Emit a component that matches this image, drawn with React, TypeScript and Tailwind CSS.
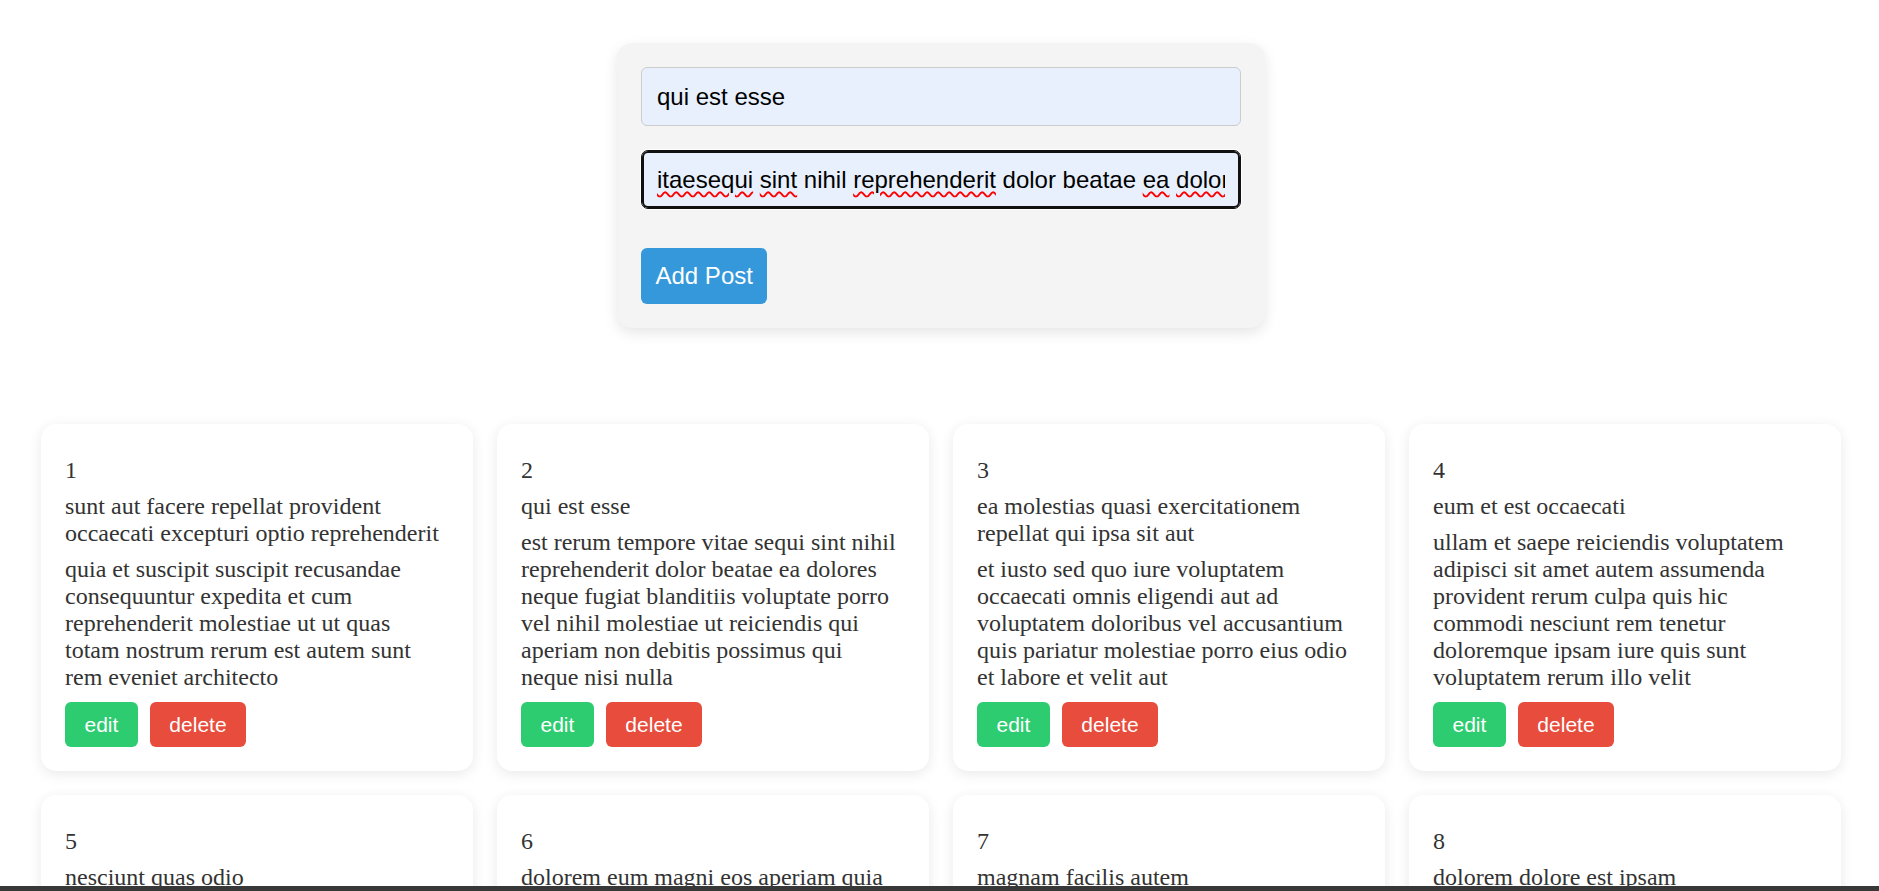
import React from "react";

type Post = { id: number; title: string; body: string };

const posts: Post[] = [
  {
    id: 1,
    title: "sunt aut facere repellat provident occaecati excepturi optio reprehenderit",
    body: "quia et suscipit suscipit recusandae consequuntur expedita et cum reprehenderit molestiae ut ut quas totam nostrum rerum est autem sunt rem eveniet architecto",
  },
  {
    id: 2,
    title: "qui est esse",
    body: "est rerum tempore vitae sequi sint nihil reprehenderit dolor beatae ea dolores neque fugiat blanditiis voluptate porro vel nihil molestiae ut reiciendis qui aperiam non debitis possimus qui neque nisi nulla",
  },
  {
    id: 3,
    title: "ea molestias quasi exercitationem repellat qui ipsa sit aut",
    body: "et iusto sed quo iure voluptatem occaecati omnis eligendi aut ad voluptatem doloribus vel accusantium quis pariatur molestiae porro eius odio et labore et velit aut",
  },
  {
    id: 4,
    title: "eum et est occaecati",
    body: "ullam et saepe reiciendis voluptatem adipisci sit amet autem assumenda provident rerum culpa quis hic commodi nesciunt rem tenetur doloremque ipsam iure quis sunt voluptatem rerum illo velit",
  },
  {
    id: 5,
    title: "nesciunt quas odio",
    body: "repudiandae veniam quaerat sunt sed alias aut fugiat sit autem sed est voluptatem omnis possimus esse voluptatibus quis est aut tenetur dolor neque",
  },
  {
    id: 6,
    title: "dolorem eum magni eos aperiam quia",
    body: "ut aspernatur corporis harum nihil quis provident sequi mollitia nobis aliquid molestiae perspiciatis et ea nemo ab reprehenderit accusantium quas voluptate dolores velit et doloremque molestiae",
  },
  {
    id: 7,
    title: "magnam facilis autem",
    body: "dolore placeat quibusdam ea quo vitae magni quis enim qui quis quo nemo aut saepe quidem repellat excepturi ut quia sunt ut sequi eos ea sed quas",
  },
  {
    id: 8,
    title: "dolorem dolore est ipsam",
    body: "dignissimos aperiam dolorem qui eum facilis quibusdam animi sint suscipit qui sint possimus cum quaerat magni maiores excepturi ipsam ut commodi dolor voluptatum modi aut vitae",
  },
];

const sans = "font-['Liberation_Sans',Arial,sans-serif]";
const serif = "font-['Liberation_Serif','Times_New_Roman',serif]";

function Misspelled({ children }: { children: React.ReactNode }) {
  return (
    <span className="underline decoration-wavy decoration-[#ff0000] decoration-[1.5px] underline-offset-[3px]">
      {children}
    </span>
  );
}

function PostCard({ post }: { post: Post }) {
  return (
    <div
      className={`flex flex-col rounded-[15px] bg-white pt-[33px] px-[24px] pb-[24px] text-[24px] leading-[normal] text-[#333333] shadow-[0_3px_14px_rgba(0,0,0,0.09)] ${serif}`}
    >
      <div>{post.id}</div>
      <div className="mt-[9px]">{post.title}</div>
      <div className="mt-[9px]">{post.body}</div>
      <div className="mt-auto pt-[11px] flex gap-[12px]">
        <button
          className={`h-[45px] rounded-[6px] bg-[#2ecc71] px-[19.5px] text-[21px] leading-[normal] text-white ${sans}`}
        >
          edit
        </button>
        <button
          className={`h-[45px] rounded-[6px] bg-[#e74c3c] px-[19.5px] text-[21px] leading-[normal] text-white ${sans}`}
        >
          delete
        </button>
      </div>
    </div>
  );
}

export default function App() {
  return (
    <div className="min-h-screen bg-white">
      <div className="ml-[41px] w-[1800px] pt-[43px] pb-[40px]">
        <div className="mx-auto w-[648px] rounded-[15px] bg-[#f4f4f4] p-[24px] shadow-[0_5px_14px_rgba(0,0,0,0.1)]">
          <input
            readOnly
            value="qui est esse"
            className={`box-border block h-[59px] w-full rounded-[6px] border border-[#cccccc] bg-[#e8f0fe] px-[15px] text-[24px] leading-[normal] text-black outline-none ${sans}`}
          />
          <div
            className={`mt-[24px] box-border flex h-[59px] w-full items-center rounded-[7px] border border-[#101010] bg-[#e8f0fe] px-[15px] text-[24px] leading-[normal] text-black shadow-[inset_0_0_0_2px_#101010,0_0_0_1px_#ffffff] ${sans}`}
          >
            <div className="overflow-hidden whitespace-nowrap pt-[6px] pb-[6px]">
              <Misspelled>itaesequi</Misspelled> <Misspelled>sint</Misspelled> nihil{" "}
              <Misspelled>reprehenderit</Misspelled> dolor beatae <Misspelled>ea</Misspelled>{" "}
              <Misspelled>dolores</Misspelled> neque fugiat blanditiis voluptate porro vel nihil
            </div>
          </div>
          <button
            className={`mt-[39px] block h-[56px] rounded-[6px] bg-[#3498db] px-[14.5px] text-[24px] leading-[normal] text-white ${sans}`}
          >
            Add Post
          </button>
        </div>

        <div className="mt-[96px] grid grid-cols-4 gap-[24px]">
          {posts.map((p) => (
            <PostCard key={p.id} post={p} />
          ))}
        </div>
      </div>
      <div className="fixed bottom-0 left-0 h-[5px] w-full bg-[#383838]" />
    </div>
  );
}
